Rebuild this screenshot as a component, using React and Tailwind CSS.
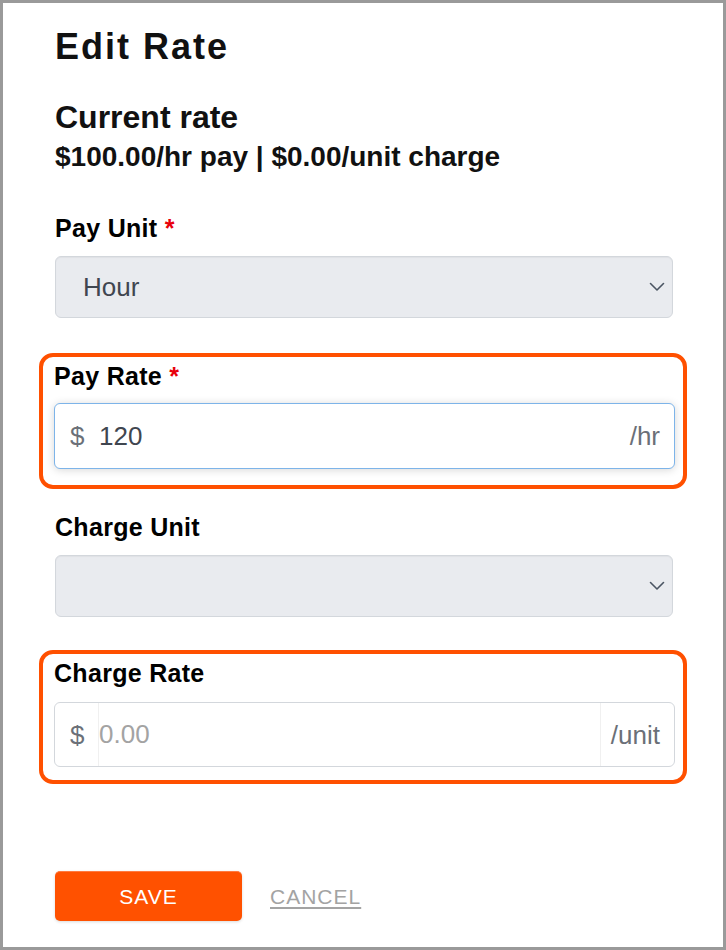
import { useState } from "react";

function Chevron() {
  return (
    <svg width="16" height="10" viewBox="0 0 16 10" fill="none" className="shrink-0">
      <polyline points="1.5,1.5 8,8 14.5,1.5" stroke="#4b5563" strokeWidth="1.6" strokeLinecap="round" strokeLinejoin="round" />
    </svg>
  );
}

function FieldLabel({ children, required }) {
  return (
    <div className="text-[25px] font-bold leading-none tracking-[0.3px] text-black">
      {children}
      {required && <span className="text-[#e8000b]"> *</span>}
    </div>
  );
}

function SelectBox({ value }) {
  return (
    <div className="flex h-[62px] items-center justify-between rounded-[6px] border border-[#d3d7dc] bg-[#e9ebef] pl-[27px] pr-[7px] shadow-[inset_0_1px_1px_rgba(0,0,0,0.04)]">
      <span className="text-[26px] leading-none text-[#3f4650]">{value}</span>
      <Chevron />
    </div>
  );
}

export default function App() {
  const [payRate, setPayRate] = useState("120");
  const [chargeRate, setChargeRate] = useState("");

  return (
    <div className="h-[950px] w-[726px] border-[3px] border-[#9a9a9a] bg-white pl-[52px] pr-[50px] pt-[26px] font-['Liberation_Sans',Arial,sans-serif]">
      {/* Header */}
      <h1 className="text-[36px] font-bold leading-none tracking-[2px] text-[#111]">Edit Rate</h1>
      <h2 className="mt-[36px] text-[32px] font-bold leading-none text-[#111]">Current rate</h2>
      <p className="mt-[10px] text-[28px] font-bold leading-none text-[#111]">
        $100.00/hr pay | $0.00/unit charge
      </p>

      {/* Pay unit */}
      <div className="mt-[45px]">
        <FieldLabel required>Pay Unit</FieldLabel>
        <div className="mt-[15px]">
          <SelectBox value="Hour" />
        </div>
      </div>

      {/* Pay rate */}
      <div className="-ml-[16px] -mr-[14px] mt-[35px] rounded-[14px] border-[4px] border-[#ff5000] pb-[16px] pl-[11px] pr-[8px] pt-[7px]">
        <FieldLabel required>Pay Rate</FieldLabel>
        <div className="mt-[14px] flex h-[66px] items-center rounded-[6px] border border-[#7db4e9] bg-white shadow-[0_1px_8px_rgba(0,0,0,0.16)]">
          <span className="w-[44px] shrink-0 pl-[15px] text-[26px] leading-none text-[#6b7078]">$</span>
          <input
            value={payRate}
            onChange={(e) => setPayRate(e.target.value)}
            className="min-w-0 flex-1 bg-transparent text-[26px] leading-none text-[#3f4650] outline-none"
          />
          <span className="shrink-0 pl-[7px] pr-[14px] text-[26px] leading-none text-[#6b7078]">/hr</span>
        </div>
      </div>

      {/* Charge unit */}
      <div className="mt-[26px]">
        <FieldLabel>Charge Unit</FieldLabel>
        <div className="mt-[15px]">
          <SelectBox value="" />
        </div>
      </div>

      {/* Charge rate */}
      <div className="-ml-[16px] -mr-[14px] mt-[33px] rounded-[14px] border-[4px] border-[#ff5000] pb-[13px] pl-[11px] pr-[8px] pt-[7px]">
        <FieldLabel>Charge Rate</FieldLabel>
        <div className="mt-[16px] flex h-[65px] items-stretch overflow-hidden rounded-[6px] border border-[#d3d7dc] bg-white">
          <span className="flex w-[44px] shrink-0 items-center border-r border-[#f0f0f0] pl-[15px] text-[26px] leading-none text-[#6b7078]">$</span>
          <input
            value={chargeRate}
            placeholder="0.00"
            onChange={(e) => setChargeRate(e.target.value)}
            className="min-w-0 flex-1 bg-transparent text-[26px] leading-none text-[#3f4650] outline-none placeholder:text-[#a3a3a3]"
          />
          <span className="flex shrink-0 items-center border-l border-[#f0f0f0] pl-[10px] pr-[14px] text-[26px] leading-none text-[#6b7078]">/unit</span>
        </div>
      </div>

      {/* Actions */}
      <div className="mt-[87px] flex items-center">
        <button className="h-[50px] w-[187px] rounded-[5px] border-t border-[#ff7a40] bg-[#ff5100] text-[21px] leading-none tracking-[1px] text-white shadow-[0_1px_3px_rgba(0,0,0,0.15)]">
          SAVE
        </button>
        <button className="ml-[28px] text-[21px] leading-none tracking-[1px] text-[#a3a3a3] underline underline-offset-[3px]">
          CANCEL
        </button>
      </div>
    </div>
  );
}
